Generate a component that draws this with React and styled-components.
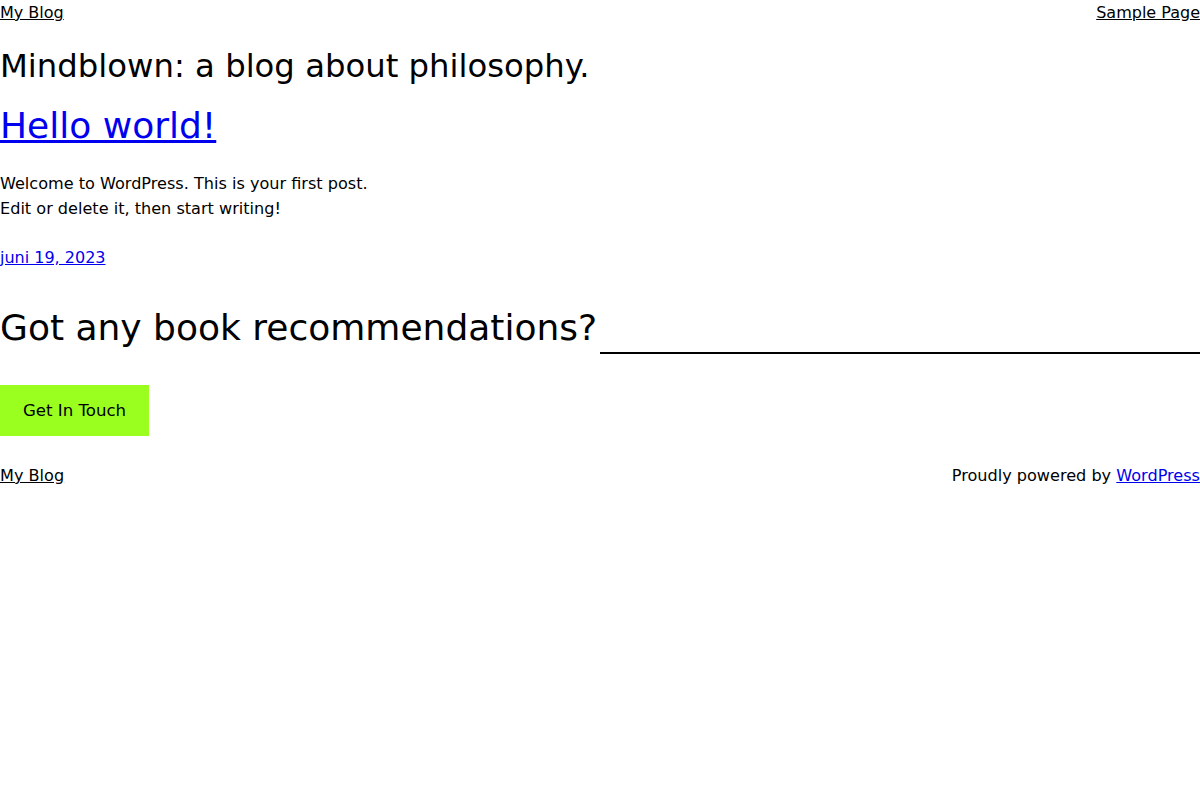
import styled, { createGlobalStyle } from "styled-components";

const GlobalStyle = createGlobalStyle`
  body {
    margin: 0;
    font-family: "DejaVu Sans", sans-serif;
    font-size: 16px;
    color: #000;
    background: #fff;
  }
`;

const Page = styled.div`
  display: flex;
  flex-direction: column;
`;

const Bar = styled.div`
  display: flex;
  justify-content: space-between;
  align-items: center;
  line-height: 26px;
`;

const PlainLink = styled.a`
  color: #000;
  text-decoration: underline;
`;

const BlueLink = styled.a`
  color: #0000ee;
  text-decoration: underline;
`;

const Tagline = styled.p`
  margin: 20px 0 0;
  font-size: 32.3px;
  line-height: 40px;
`;

const PostTitle = styled.h2`
  margin: 17px 0 0;
  font-size: 36px;
  font-weight: normal;
  line-height: 46px;
`;

const Excerpt = styled.p`
  margin: 22px 0 0;
  font-size: 16.1px;
  line-height: 25px;
`;

const PostDate = styled.div`
  margin-top: 24px;
  line-height: 25px;
`;

const CallRow = styled.div`
  display: flex;
  align-items: flex-end;
  margin-top: 32px;
`;

const CallHeading = styled.h2`
  margin: 0;
  font-size: 36px;
  font-weight: normal;
  line-height: 52px;
  white-space: nowrap;
`;

const Rule = styled.hr`
  flex: 1;
  margin: 0 0 0 3px;
  border: none;
  border-top: 2px solid #000;
`;

const Button = styled.a`
  align-self: flex-start;
  margin-top: 31px;
  display: inline-block;
  box-sizing: border-box;
  width: 149px;
  height: 51px;
  line-height: 51px;
  text-align: center;
  font-size: 16.6px;
  background: #9aff1f;
  color: #000;
  text-decoration: none;
`;

const Footer = styled(Bar)`
  margin-top: 27px;
  font-size: 16.1px;
`;

export default function App() {
  return (
    <Page>
      <GlobalStyle />
      <Bar>
        <PlainLink href="#">My Blog</PlainLink>
        <PlainLink href="#">Sample Page</PlainLink>
      </Bar>
      <Tagline>Mindblown: a blog about philosophy.</Tagline>
      <PostTitle>
        <BlueLink href="#">Hello world!</BlueLink>
      </PostTitle>
      <Excerpt>
        Welcome to WordPress. This is your first post.
        <br />
        Edit or delete it, then start writing!
      </Excerpt>
      <PostDate>
        <BlueLink href="#">juni 19, 2023</BlueLink>
      </PostDate>
      <CallRow>
        <CallHeading>Got any book recommendations?</CallHeading>
        <Rule />
      </CallRow>
      <Button href="#">Get In Touch</Button>
      <Footer>
        <PlainLink href="#">My Blog</PlainLink>
        <span>
          Proudly powered by <BlueLink href="#">WordPress</BlueLink>
        </span>
      </Footer>
    </Page>
  );
}
